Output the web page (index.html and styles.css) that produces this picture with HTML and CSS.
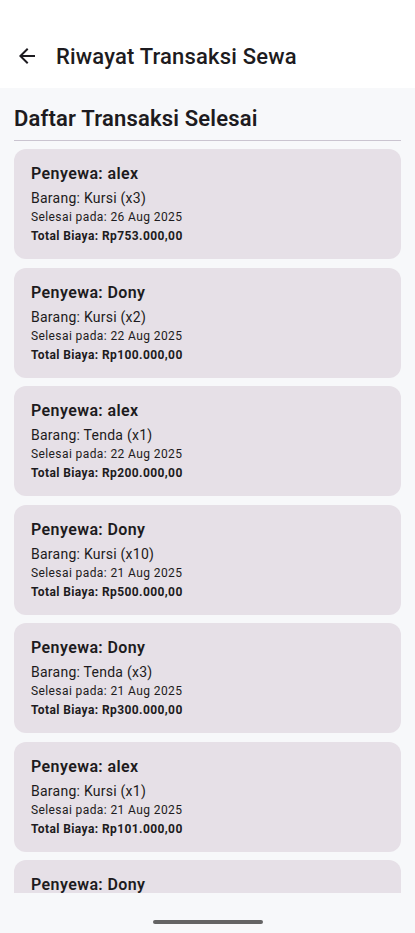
FILE: index.html
```html
<!DOCTYPE html>
<html lang="id">
<head>
<meta charset="utf-8">
<title>Riwayat Transaksi Sewa</title>
<link rel="stylesheet" href="styles.css">
</head>
<body>
<div class="screen">
  <header class="appbar">
    <svg class="back" viewBox="0 0 24 24" width="24" height="24"><path d="M20 11H7.83l5.59-5.59L12 4l-8 8 8 8 1.41-1.41L7.83 13H20v-2z" fill="#1d1b20"/></svg>
    <h1 class="title">Riwayat Transaksi Sewa</h1>
  </header>
  <main class="content">
    <h2 class="section">Daftar Transaksi Selesai</h2>
    <div class="divider"></div>
    <div class="list">
      <div class="card"><div class="name">Penyewa: alex</div><div class="item">Barang: Kursi (x3)</div><div class="date">Selesai pada: 26 Aug 2025</div><div class="total">Total Biaya: Rp753.000,00</div></div>
      <div class="card"><div class="name">Penyewa: Dony</div><div class="item">Barang: Kursi (x2)</div><div class="date">Selesai pada: 22 Aug 2025</div><div class="total">Total Biaya: Rp100.000,00</div></div>
      <div class="card"><div class="name">Penyewa: alex</div><div class="item">Barang: Tenda (x1)</div><div class="date">Selesai pada: 22 Aug 2025</div><div class="total">Total Biaya: Rp200.000,00</div></div>
      <div class="card"><div class="name">Penyewa: Dony</div><div class="item">Barang: Kursi (x10)</div><div class="date">Selesai pada: 21 Aug 2025</div><div class="total">Total Biaya: Rp500.000,00</div></div>
      <div class="card"><div class="name">Penyewa: Dony</div><div class="item">Barang: Tenda (x3)</div><div class="date">Selesai pada: 21 Aug 2025</div><div class="total">Total Biaya: Rp300.000,00</div></div>
      <div class="card"><div class="name">Penyewa: alex</div><div class="item">Barang: Kursi (x1)</div><div class="date">Selesai pada: 21 Aug 2025</div><div class="total">Total Biaya: Rp101.000,00</div></div>
      <div class="card"><div class="name">Penyewa: Dony</div></div>
    </div>
  </main>
  <div class="navbar"><div class="handle"></div></div>
</div>
</body>
</html>
```
FILE: styles.css
```css
* { box-sizing: border-box; }
html, body { margin: 0; padding: 0; }
body {
  font-family: Roboto, "Noto Sans", sans-serif;
  color: #1d1b20;
  background: #f7f8fa;
}
.screen {
  width: 415px;
  height: 933px;
  display: flex;
  flex-direction: column;
  overflow: hidden;
}
.appbar {
  height: 88px;
  flex: none;
  background: #ffffff;
  display: flex;
  align-items: center;
  padding: 24px 0 0 15px;
}
.back { flex: none; }
.title {
  margin: 0 0 0 17px;
  font-size: 22px;
  font-weight: 500;
  letter-spacing: 0.18px;
}
.content {
  flex: 1;
  min-height: 0;
  overflow: hidden;
  padding: 0 14px;
  background: #f7f8fa;
}
.section {
  margin: 0;
  padding-top: 16px;
  height: 52px;
  font-size: 22px;
  font-weight: 600;
  line-height: 30px;
  letter-spacing: 0.18px;
}
.divider {
  height: 1px;
  background: #cac4d0;
  margin-bottom: 8px;
}
.list {
  display: flex;
  flex-direction: column;
  gap: 8.5px;
}
.card {
  background: #e6e0e7;
  border-radius: 12px;
  height: 110px;
  flex: none;
  padding: 14px 17px 0;
}
.name {
  font-size: 16px;
  font-weight: 600;
  line-height: 22px;
  margin-bottom: 3px;
  letter-spacing: 0.4px;
}
.item {
  font-size: 14px;
  line-height: 20px;
  letter-spacing: 0.25px;
}
.date {
  font-size: 12px;
  line-height: 19px;
  letter-spacing: 0.4px;
}
.total {
  font-size: 12px;
  font-weight: 700;
  line-height: 19px;
  letter-spacing: 0.4px;
}
.navbar {
  height: 40px;
  flex: none;
  background: #f7f8fa;
  display: flex;
  justify-content: center;
  padding-top: 27px;
}
.handle {
  width: 110px;
  height: 4px;
  border-radius: 2px;
  background: #646464;
}
```
